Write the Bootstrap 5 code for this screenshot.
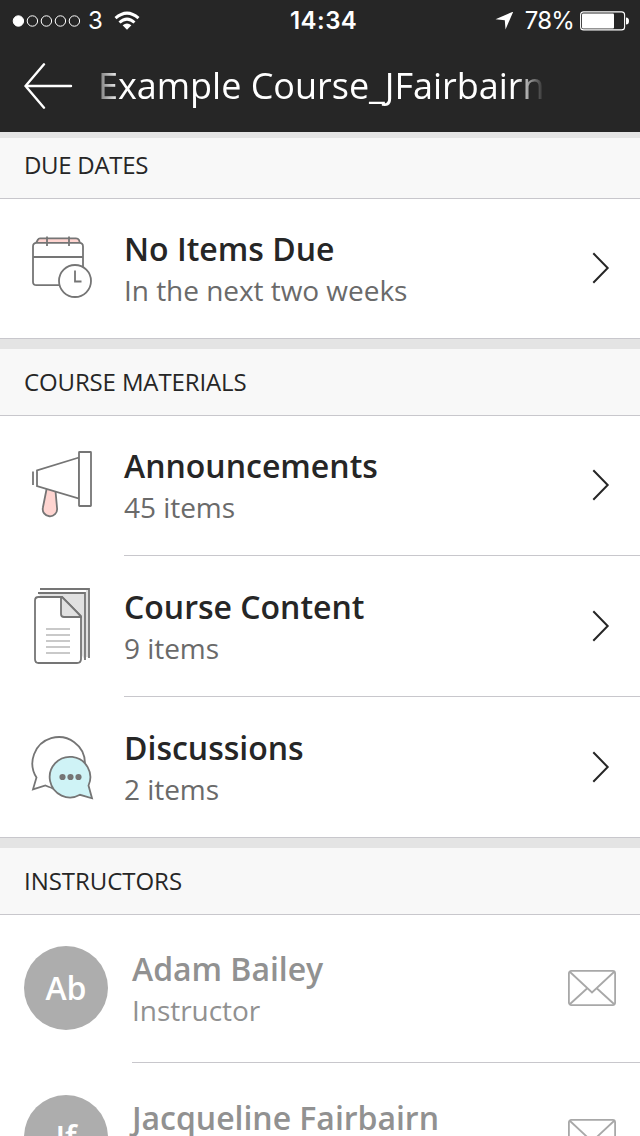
<!DOCTYPE html>
<html lang="en">
<head>
<meta charset="utf-8">
<meta name="viewport" content="width=device-width, initial-scale=1">
<title>Example Course_JFairbairn</title>
<link href="https://cdn.jsdelivr.net/npm/bootstrap@5.3.0/dist/css/bootstrap.min.css" rel="stylesheet">
<style>
  body { font-family: "Open Sans", "Noto Sans", sans-serif; color: #262626; height: 1136px; line-height: 1; }
  svg { display: block; flex: none; }
  .topbar { background: #262626; height: 132px; }
  .status { height: 40px; font-family: Inter, "Liberation Sans", sans-serif; font-size: 24px; padding: 1px 10px 0 12px; display: grid; grid-template-columns: 278px auto 1fr; }
  .carrier { margin-left: 6px; }
  .wifi { margin-left: 11px; }
  .clock { font-weight: 600; letter-spacing: .45px; }
  .pct { letter-spacing: -.8px; margin: 0 6px 0 12px; }
  .titlebar { height: 92px; padding-left: 24px; }
  .course-title { font-size: 36px; line-height: 52px; width: 448px; margin-left: 21px; white-space: nowrap; overflow: hidden; letter-spacing: -.02px;
    -webkit-mask-image: linear-gradient(90deg, rgba(0,0,0,.25), #000 26px, #000 422px, rgba(0,0,0,.1)); mask-image: linear-gradient(90deg, rgba(0,0,0,.25), #000 26px, #000 422px, rgba(0,0,0,.1)); }
  .gap-band { background: #e4e4e4; height: 10px; }
  .gap-band.first { height: 6px; }
  .section-head { background: #f8f8f8; height: 67px; border-bottom: 1px solid #c8c7cc; font-size: 24px; padding: 0 24px; font-weight: 400; letter-spacing: -.13px; }
  .section-head.first { height: 61px; padding-bottom: 6px; letter-spacing: -.3px; }
  .section-head.people { letter-spacing: -.04px; }
  .item { height: 139px; padding: 0 30px 1px 24px; }
  .item.tall { height: 140px; padding-bottom: 0; }
  .item-icon { width: 100px; }
  .item-text { padding-top: 2px; }
  .item-title { font-size: 32px; font-weight: 600; line-height: 42px; }
  .item-sub { font-size: 28px; color: #6a6a6a; line-height: 41px; letter-spacing: -.04px; }
  .rule { height: 1px; background: #c8c7cc; margin-left: 124px; }
  .rule.full { margin-left: 0; }
  .rule.person-rule { margin-left: 132px; }
  .person { height: 147px; padding: 0 24px 1px; color: #919191; }
  .person.last { height: 148px; padding-bottom: 0; }
  .person .item-text { padding-top: 3px; }
  .person .item-title { letter-spacing: -.03px; }
  .person .item-sub { color: #919191; }
  .avatar { width: 84px; height: 84px; margin-right: 24px; background: #adadad; color: #fff; font-size: 32px; font-weight: 600; }
</style>
</head>
<body class="bg-white overflow-hidden">
<header class="topbar text-white">
  <div class="status align-items-center">
    <div class="d-flex align-items-center">
      <svg width="70" height="14" viewBox="0 0 70 14" fill="none" stroke="#fff" stroke-width="1"><circle cx="6.4" cy="7" r="5.2" fill="#fff"/><circle cx="20.4" cy="7" r="5.2"/><circle cx="34.4" cy="7" r="5.2"/><circle cx="48.4" cy="7" r="5.2"/><circle cx="62.4" cy="7" r="5.2"/></svg>
      <span class="carrier">3</span>
      <svg class="wifi" width="26" height="20" viewBox="0 0 26 20" fill="none" stroke="#fff" stroke-width="3"><path d="M1.500 7.200Q13-3 24.500 7.200"/><path d="M5.500 11.500Q13 4.800 20.500 11.500"/><path d="M8.600 14.200Q13 10.600 17.400 14.200L13 18.700Z" fill="#fff" stroke="none"/></svg>
    </div>
    <div class="clock">14:34</div>
    <div class="d-flex align-items-center justify-content-end">
      <svg width="19" height="19" viewBox="0 0 19 19" fill="#fff"><path d="M19.300.5 11.500 18.500 10.800 9.200 1.500 8.300Z"/></svg>
      <span class="pct">78%</span>
      <svg width="50" height="20" viewBox="0 0 50 20"><rect x=".6" y=".9" width="44" height="18" rx="3" fill="none" stroke="#fff" stroke-width="1.1"/><rect x="2" y="2.400" width="32" height="15" rx="1" fill="#fff"/><path d="M46 6.500Q49 6.500 49 10T46 13.500Z" fill="#fff"/></svg>
    </div>
  </div>
  <div class="titlebar d-flex align-items-center">
    <svg width="49" height="46" viewBox="0 0 49 46" fill="none" stroke="#fff" stroke-width="2.400" stroke-linecap="round" stroke-linejoin="round"><path d="M20 1.300 1.500 23 20 44.700M1.500 23H47"/></svg>
    <div class="course-title ps-1">Example Course_JFairbairn</div>
  </div>
</header>

<main>
  <div class="gap-band first"></div>
  <h2 class="section-head first d-flex align-items-center m-0">DUE DATES</h2>
  <div class="item d-flex align-items-center">
    <div class="item-icon">
      <svg width="76" height="80" viewBox="0 -1 76 80" fill="none" stroke="#757575" stroke-width="1.800">
        <path d="M12 14 14 10.500Q14.500 9.300 16 9.300H52Q54 9.300 55 11L56 14" fill="#ffd5d1"/>
        <path d="M12.500 13.900H55.500Q59 13.900 59 17.500V53Q59 56.200 55.500 56.200H12.500Q9 56.200 9 53V17.500Q9 13.900 12.500 13.900Z" fill="#fff"/>
        <path d="M9 28H59M23 7.500V17M45 7.500V17"/>
        <circle cx="51" cy="52" r="16" fill="#fff"/><path d="M51 41.500V52.500H57.500"/>
      </svg>
    </div>
    <div class="item-text flex-grow-1"><div class="item-title">No Items Due</div><div class="item-sub">In the next two weeks</div></div>
    <svg width="19" height="32" viewBox="0 0 19 32" fill="none" stroke="#262626" stroke-width="2"><path d="M2.300 1.300 16.700 16 2.300 30.700"/></svg>
  </div>
  <div class="rule full"></div>

  <div class="gap-band"></div>
  <h2 class="section-head d-flex align-items-center m-0">COURSE MATERIALS</h2>
  <div class="item d-flex align-items-center">
    <div class="item-icon">
      <svg width="76" height="80" viewBox="0 0 76 80" fill="none" stroke="#757575" stroke-width="1.800">
        <path d="M22.800 43 18.900 62.500A7.200 7.200 0 1 0 33.100 63.500L31.400 45Z" fill="#ffd5d1"/>
        <path d="M55 12.500 13 25.500V41L55 53.500Z" fill="#fff"/><rect x="55" y="7" width="12" height="54" rx=".5" fill="#fff"/><path d="M9 26.500V40"/>
      </svg>
    </div>
    <div class="item-text flex-grow-1"><div class="item-title">Announcements</div><div class="item-sub">45 items</div></div>
    <svg width="19" height="32" viewBox="0 0 19 32" fill="none" stroke="#262626" stroke-width="2"><path d="M2.300 1.300 16.700 16 2.300 30.700"/></svg>
  </div>
  <div class="rule"></div>
  <div class="item tall d-flex align-items-center">
    <div class="item-icon">
      <svg width="76" height="80" viewBox="0 0 76 80" fill="none" stroke="#757575" stroke-width="1.800">
        <path d="M16 3H65V72"/>
        <path d="M62 4H64V71H62Z" fill="#e1e1e1" stroke="none"/>
        <path d="M14 7H61V74" fill="#e1e1e1"/>
        <path d="M14.500 11H38L57 30V73Q57 77 53 77H14.500Q11 77 11 73V14.500Q11 11 14.500 11Z" fill="#fff"/>
        <path d="M37 11V28Q37 31 40 31H57Q57 30 38 11Z" fill="#e1e1e1"/>
        <path d="M22 43H46M22 49H46M22 55H46M22 61H46M22 67H46" stroke="#c9c9c9"/>
      </svg>
    </div>
    <div class="item-text flex-grow-1"><div class="item-title">Course Content</div><div class="item-sub">9 items</div></div>
    <svg width="19" height="32" viewBox="0 0 19 32" fill="none" stroke="#262626" stroke-width="2"><path d="M2.300 1.300 16.700 16 2.300 30.700"/></svg>
  </div>
  <div class="rule"></div>
  <div class="item tall d-flex align-items-center">
    <div class="item-icon">
      <svg width="76" height="80" viewBox="0 0 76 80" fill="none" stroke="#757575" stroke-width="1.800">
        <path d="M12.500 50.500A26.300 26.300 0 1 1 61 36L30 62Q28 61 21.500 58.500L9 62.300Z" fill="#fff"/>
        <path d="M64.500 58.500A20.300 20.300 0 1 0 56 67.800L68 71.300Z" fill="#cff3f6"/>
        <g fill="#757575" stroke="none"><circle cx="38.500" cy="50" r="3.100"/><circle cx="46.500" cy="50" r="3.100"/><circle cx="54.500" cy="50" r="3.100"/></g>
      </svg>
    </div>
    <div class="item-text flex-grow-1"><div class="item-title">Discussions</div><div class="item-sub">2 items</div></div>
    <svg width="19" height="32" viewBox="0 0 19 32" fill="none" stroke="#262626" stroke-width="2"><path d="M2.300 1.300 16.700 16 2.300 30.700"/></svg>
  </div>
  <div class="rule full"></div>

  <div class="gap-band"></div>
  <h2 class="section-head people d-flex align-items-center m-0">INSTRUCTORS</h2>
  <div class="person d-flex align-items-center">
    <div class="avatar rounded-circle d-flex align-items-center justify-content-center">Ab</div>
    <div class="item-text flex-grow-1"><div class="item-title">Adam Bailey</div><div class="item-sub">Instructor</div></div>
    <svg width="48" height="36" viewBox="0 0 48 36" fill="none" stroke="#a8a8a8" stroke-width="1.800"><rect x=".9" y=".9" width="46.200" height="34.200" rx="2.500"/><path d="M1.500 1.500 24 22.500 46.500 1.500M1.500 34.500 19 18.500M46.500 34.500 29 18.500"/></svg>
  </div>
  <div class="rule person-rule"></div>
  <div class="person last d-flex align-items-center">
    <div class="avatar rounded-circle d-flex align-items-center justify-content-center">Jf</div>
    <div class="item-text flex-grow-1"><div class="item-title">Jacqueline Fairbairn</div><div class="item-sub">Instructor</div></div>
    <svg width="48" height="36" viewBox="0 0 48 36" fill="none" stroke="#a8a8a8" stroke-width="1.800"><rect x=".9" y=".9" width="46.200" height="34.200" rx="2.500"/><path d="M1.500 1.500 24 22.500 46.500 1.500M1.500 34.500 19 18.500M46.500 34.500 29 18.500"/></svg>
  </div>
</main>
<script src="https://cdn.jsdelivr.net/npm/bootstrap@5.3.0/dist/js/bootstrap.bundle.min.js"></script>
</body>
</html>
